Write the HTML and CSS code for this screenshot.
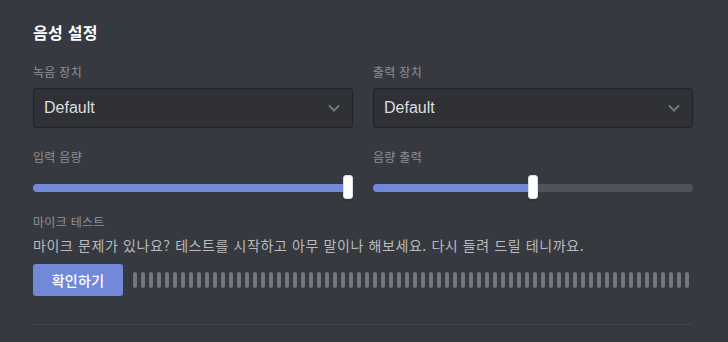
FILE: index.html
```html
<!DOCTYPE html>
<html lang="ko">
<head>
    <meta charset="UTF-8">
    <meta name="viewport" content="width=device-width, initial-scale=1.0">
    <title>음성 설정</title>
    <link rel="stylesheet" href="styles.css">
</head>
<body>
    <div class="settings">
        <h2 class="title">음성 설정</h2>

        <div class="row">
            <div class="field">
                <div class="label">녹음 장치</div>
                <div class="select">
                    <span>Default</span>
                    <svg class="chevron" width="12" height="8" viewBox="0 0 12 8"><path d="M1 1.5l5 5 5-5" fill="none" stroke="currentColor" stroke-width="2"/></svg>
                </div>
            </div>
            <div class="field">
                <div class="label">출력 장치</div>
                <div class="select">
                    <span>Default</span>
                    <svg class="chevron" width="12" height="8" viewBox="0 0 12 8"><path d="M1 1.5l5 5 5-5" fill="none" stroke="currentColor" stroke-width="2"/></svg>
                </div>
            </div>
        </div>

        <div class="row sliders">
            <div class="field">
                <div class="label">입력 음량</div>
                <div class="slider">
                    <div class="track"><div class="fill" style="width: 100%"></div></div>
                    <div class="knob" style="left: 100%; transform: translateX(-100%)"></div>
                </div>
            </div>
            <div class="field">
                <div class="label">음량 출력</div>
                <div class="slider">
                    <div class="track"><div class="fill" style="width: 50%"></div></div>
                    <div class="knob" style="left: 50%; transform: translateX(-50%)"></div>
                </div>
            </div>
        </div>

        <div class="mic-test">
            <div class="label">마이크 테스트</div>
            <p class="desc">마이크 문제가 있나요? 테스트를 시작하고 아무 말이나 해보세요. 다시 들려 드릴 테니까요.</p>
            <div class="test-row">
                <button class="check-btn">확인하기</button>
                <div class="meter" id="meter"></div>
            </div>
        </div>

        <div class="divider"></div>
    </div>
    <script>
        var meter = document.getElementById("meter");
        for (var i = 0; i < 70; i++) {
            var bar = document.createElement("span");
            bar.className = "bar";
            meter.appendChild(bar);
        }
    </script>
</body>
</html>
```

FILE: styles.css
```css
body {
    margin: 0;
    background: #36393f;
    font-family: "Liberation Sans", "Noto Sans CJK KR", sans-serif;
    color: #dcddde;
}
.settings {
    padding: 22px 35px 0 33px;
}
.title {
    margin: 0 0 22px;
    font-size: 16px;
    line-height: 20px;
    font-weight: 700;
    color: #ffffff;
    font-family: "Noto Sans CJK KR", sans-serif;
    letter-spacing: 0.3px;
}
.row {
    display: grid;
    grid-template-columns: 1fr 1fr;
    gap: 20px;
}
.label {
    font-family: "Noto Sans CJK KR", sans-serif;
    font-size: 12px;
    line-height: 16px;
    color: #8e9297;
    margin-bottom: 8px;
    letter-spacing: 0.3px;
}
.select {
    height: 38px;
    border: 1px solid #202225;
    border-radius: 3px;
    background: #2f3136;
    display: flex;
    align-items: center;
    justify-content: space-between;
    padding: 0 12px 0 10px;
    font-size: 16px;
    color: #dcddde;
}
.chevron {
    color: #72767d;
}
.sliders {
    margin-top: 21px;
}
.sliders .label {
    margin-bottom: 10px;
}
.slider {
    position: relative;
    height: 24px;
}
.track {
    position: absolute;
    left: 0;
    right: 0;
    top: 9px;
    height: 8px;
    border-radius: 4px;
    background: #4f545c;
    overflow: hidden;
}
.fill {
    height: 100%;
    background: #7289da;
}
.knob {
    position: absolute;
    top: 0;
    width: 10px;
    height: 24px;
    box-sizing: border-box;
    border: 1px solid #dcddde;
    border-radius: 3px;
    background: #ffffff;
    box-shadow: 0 3px 1px rgba(0, 0, 0, 0.1);
}
.mic-test {
    margin-top: 15px;
}
.mic-test .label {
    margin-bottom: 5px;
}
.desc {
    margin: 0;
    font-family: "Noto Sans CJK KR", sans-serif;
    font-size: 14px;
    line-height: 20px;
    color: #b9bbbe;
    letter-spacing: 0.6px;
}
.test-row {
    display: flex;
    align-items: center;
    margin-top: 9px;
}
.check-btn {
    width: 90px;
    height: 32px;
    border: none;
    border-radius: 3px;
    background: #7289da;
    color: #ffffff;
    font-family: "Noto Sans CJK KR", sans-serif;
    font-size: 14px;
    font-weight: 500;
    letter-spacing: 0.3px;
    cursor: pointer;
    flex-shrink: 0;
}
.meter {
    display: flex;
    gap: 4px;
    margin-left: 10px;
}
.bar {
    width: 4px;
    height: 16px;
    border-radius: 2px;
    background: #72767d;
}
.divider {
    margin-top: 28px;
    height: 1px;
    background: #42454a;
}
```
